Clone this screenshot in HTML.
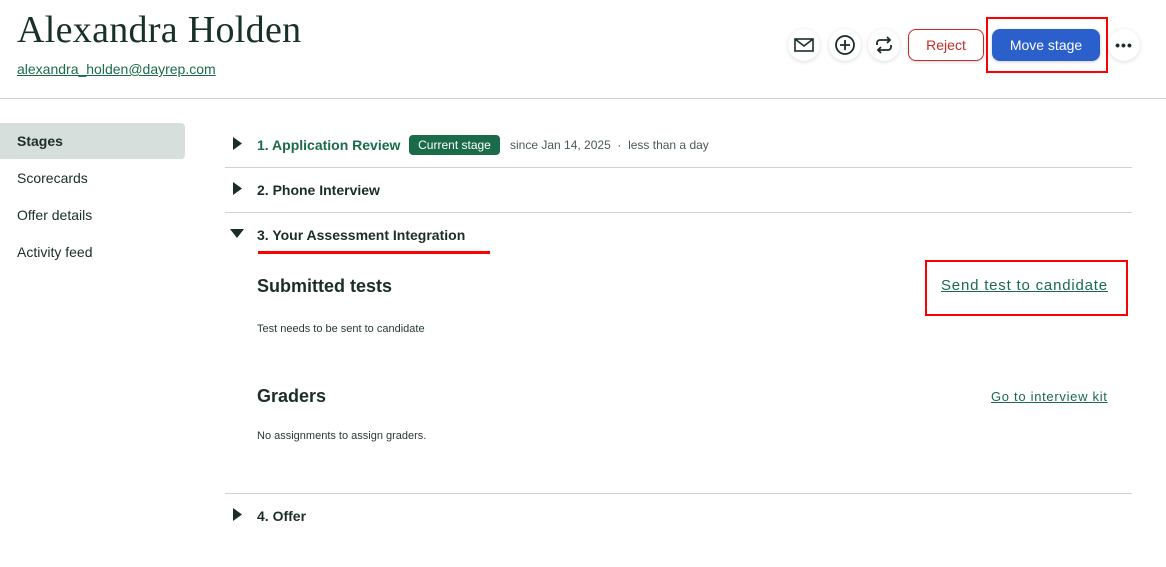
<!DOCTYPE html>
<html><head><meta charset="utf-8"><style>
*{margin:0;padding:0;box-sizing:border-box}
body{width:1166px;height:567px;background:#fff;font-family:"Liberation Sans",sans-serif;color:#1a2e26;position:relative;overflow:hidden}
.a{position:absolute}
h1{position:absolute;left:17px;top:8px;font-family:"Liberation Serif",serif;font-weight:400;font-size:38px;color:#17302a;letter-spacing:0.3px}
.email{left:17px;top:61px;font-size:14px;color:#1a6b4a;text-decoration:underline}
.hr{height:1px;background:#ccd4d0}
.ic{width:32px;height:32px;border-radius:50%;background:#fff;box-shadow:0 1px 4px rgba(0,0,0,.15);top:29px;display:flex;align-items:center;justify-content:center}
.nav{left:17px;font-size:14px;color:#1a2e26}
.st{font-size:14px;font-weight:700}
.lk{color:#1a6b4a;text-decoration:underline}
</style></head><body>
<h1>Alexandra Holden</h1>
<div class="a email">alexandra_holden@dayrep.com</div>
<div class="a ic" style="left:788px"><svg width="20" height="16" viewBox="0 0 20 16"><rect x="1" y="2" width="18" height="12" fill="none" stroke="#1a2e26" stroke-width="1.6"/><path d="M1 2l9 7 9-7" fill="none" stroke="#1a2e26" stroke-width="1.6"/></svg></div>
<div class="a ic" style="left:829px"><svg width="22" height="22" viewBox="0 0 22 22"><circle cx="11" cy="11" r="9" fill="none" stroke="#1a2e26" stroke-width="1.8"/><path d="M11 6v10M6 11h10" stroke="#1a2e26" stroke-width="1.8"/></svg></div>
<div class="a ic" style="left:868px"><svg width="20" height="20" viewBox="0 0 20 20" fill="none" stroke="#1a2e26" stroke-width="1.8"><path d="M3 10V8a3 3 0 0 1 3-3h10M13 2l3 3-3 3M17 10v2a3 3 0 0 1-3 3H4M7 18l-3-3 3-3"/></svg></div>
<div class="a" style="left:908px;top:29px;width:76px;height:32px;border:1px solid #c92a2a;border-radius:8px;color:#c92a2a;font-size:14px;display:flex;align-items:center;justify-content:center;box-shadow:0 1px 3px rgba(0,0,0,.15)">Reject</div>
<div class="a" style="left:986px;top:17px;width:122px;height:56px;border:2px solid #f00"></div>
<div class="a" style="left:992px;top:29px;width:108px;height:32px;background:#2b5fcc;border-radius:8px;color:#fff;font-size:14px;display:flex;align-items:center;justify-content:center;box-shadow:0 1px 3px rgba(0,0,0,.2)">Move stage</div>
<div class="a ic" style="left:1108px;font-weight:700;font-size:14px;letter-spacing:1px">•••</div>
<div class="a hr" style="left:0;top:98px;width:1166px"></div>
<div class="a" style="left:0;top:123px;width:185px;height:36px;background:#d6dfdc;border-radius:0 4px 4px 0"></div>
<div class="a nav" style="top:133px;font-weight:700">Stages</div>
<div class="a nav" style="top:170px">Scorecards</div>
<div class="a nav" style="top:207px">Offer details</div>
<div class="a nav" style="top:244px">Activity feed</div>
<svg class="a" style="left:233px;top:137px" width="10" height="13"><path d="M0 0L9 6.5 0 13z" fill="#1a2e26"/></svg>
<div class="a st" style="left:257px;top:137px;color:#1a6b4a">1. Application Review</div>
<div class="a" style="left:409px;top:135px;width:91px;height:20px;background:#1a6b4a;border-radius:4px;color:#fff;font-size:12px;display:flex;align-items:center;justify-content:center">Current stage</div>
<div class="a" style="left:510px;top:138px;font-size:12px;color:#4a5a54">since Jan 14, 2025 &nbsp;· &nbsp;less than a day</div>
<div class="a hr" style="left:225px;top:167px;width:907px"></div>
<svg class="a" style="left:233px;top:182px" width="10" height="13"><path d="M0 0L9 6.5 0 13z" fill="#1a2e26"/></svg>
<div class="a st" style="left:257px;top:182px">2. Phone Interview</div>
<div class="a hr" style="left:225px;top:212px;width:907px"></div>
<svg class="a" style="left:230px;top:229px" width="14" height="9"><path d="M0 0H14L7 9z" fill="#1a2e26"/></svg>
<div class="a st" style="left:257px;top:227px">3. Your Assessment Integration</div>
<div class="a" style="left:258px;top:251px;width:232px;height:3px;background:#f00"></div>
<div class="a" style="left:257px;top:276px;font-size:18px;font-weight:700">Submitted tests</div>
<div class="a" style="left:925px;top:260px;width:203px;height:56px;border:2px solid #f00"></div>
<div class="a lk" style="left:941px;top:277px;font-size:15px;letter-spacing:0.8px">Send test to candidate</div>
<div class="a" style="left:257px;top:323px;font-size:11px;color:#2a3a34">Test needs to be sent to candidate</div>
<div class="a" style="left:257px;top:386px;font-size:18px;font-weight:700">Graders</div>
<div class="a lk" style="left:991px;top:389px;font-size:13px;letter-spacing:0.7px">Go to interview kit</div>
<div class="a" style="left:257px;top:430px;font-size:11px;color:#2a3a34">No assignments to assign graders.</div>
<div class="a hr" style="left:225px;top:493px;width:907px"></div>
<svg class="a" style="left:233px;top:508px" width="10" height="13"><path d="M0 0L9 6.5 0 13z" fill="#1a2e26"/></svg>
<div class="a st" style="left:257px;top:508px">4. Offer</div>
</body></html>
